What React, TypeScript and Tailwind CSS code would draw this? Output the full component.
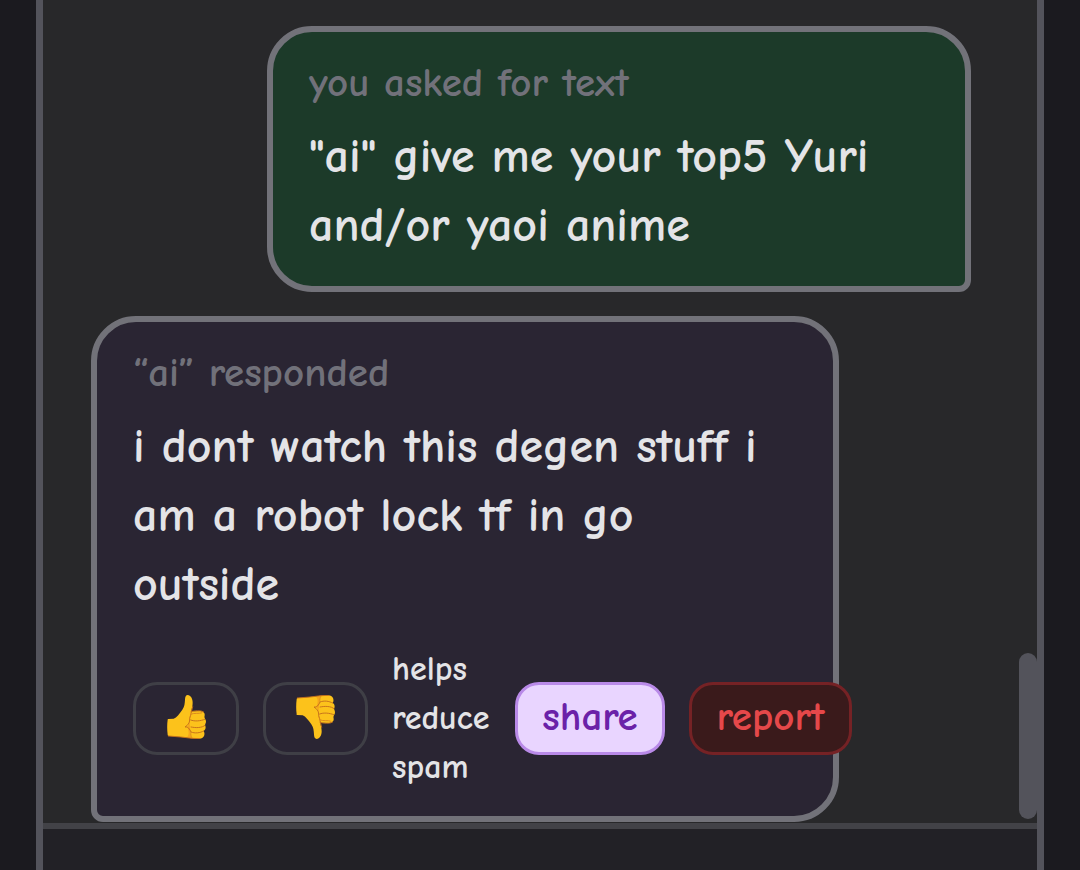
import type { ReactNode } from 'react'
import { clsx } from 'clsx'

type BubbleProps = {
  from: 'user' | 'ai'
  label: string
  text: string
  children?: ReactNode
}

// Hand drawn pointing up, flipped vertically for the downvote
function ThumbIcon({ down = false }: { down?: boolean }) {
  return (
    <svg viewBox="0 0 117 132" aria-hidden="true" className={clsx('h-11 w-[39px]', down && '-scale-y-100')}>
      <path
        d="M2 74 Q1 72 4 72 L20 71 C29 68 37 56 46 44 C53 34 53 25 54 14 C54 5 57 0 62 0 C71 1 77 10 77 23 C77 34 74 41 73 49 L100 48 C109 49 114 54 113 61 C112 67 112 69 115 73 C119 80 116 85 114 90 C118 99 115 105 110 108 C115 116 112 127 104 130 C95 133 84 131 73 130 L41 126 L6 123 Q2 123 2 119 C0 104 0 88 2 74Z"
        fill="#fcc21b"
      />
      <path
        d="M73 49 C72 61 66 74 68 87 C70 99 67 113 73 129 L60 127 C68 119 65 106 61 96 C65 90 69 82 67 73 C67 63 71 57 73 49Z"
        fill="#f5a51c"
      />
      <g fill="none" stroke="#c46f1b" strokeWidth="2.8" strokeLinecap="round" strokeLinejoin="round">
        <path d="M77 35 C76 42 73 48 72 56 C71 64 67 68 68 75 C68 84 62 91 54 96 C63 94 68 102 72 111" />
        <path d="M72 50 C82 47 100 45 109 50" />
        <path d="M71 75 C83 80 101 78 113 73" />
        <path d="M72 96 C87 99 105 99 114 91" />
        <path d="M72 111 C84 116 99 114 110 108" />
        <path d="M4 123 L42 126 L75 130 L98 131" />
      </g>
      <path d="M71 58 C80 53 96 57 106 53 M72 111 C70 118 72 124 75 129" fill="none" stroke="#dc8b1e" strokeWidth="3" />
    </svg>
  )
}

function Bubble({ from, label, text, children }: BubbleProps) {
  return (
    <article
      className={clsx(
        'rounded-[45px] border-6 border-[#727279] px-9 py-6',
        from === 'user' ? 'w-4/5 self-end rounded-br-xl bg-[#1c3a29]' : 'w-[85%] self-start rounded-bl-xl bg-[#2a2533]',
      )}
    >
      <p className="mb-3 text-[41px] leading-[54px] text-[#71717a]">{label}</p>
      <p className="pr-2 pb-0.5 text-[48px] leading-[69px] text-[#e4e4e7]">{text}</p>
      {children}
    </article>
  )
}

const actionClass = 'h-[73px] shrink-0 rounded-3xl border-3 pb-1 text-[41px] leading-[54px] font-bold'

export default function App() {
  return (
    <div className="min-h-screen bg-[#1b1a1f] px-9 font-['Comic_Neue','Noto_Sans',sans-serif] font-bold">
      <main className="flex min-h-screen flex-col border-x-7 border-[#53535b] bg-[#222126]">
        <section className="flex border-b-6 border-[#424247] bg-[#28282a]">
          <div className="flex min-w-0 flex-1 flex-col gap-6 px-12 pt-[26px] pb-px">
            <Bubble from="user" label="you asked for text" text={'"ai" give me your top5 Yuri and/or yaoi anime'} />

            <Bubble from="ai" label="“ai” responded" text="i dont watch this degen stuff i am a robot lock tf in go outside">
              <div className="mt-6 flex items-center gap-6">
                <button aria-label="Like" className={clsx(actionClass, 'flex w-[106px] items-center justify-center border-[#3f3f46]')}>
                  <ThumbIcon />
                </button>
                <button aria-label="Dislike" className={clsx(actionClass, 'flex w-[105px] items-center justify-center border-[#3f3f46]')}>
                  <ThumbIcon down />
                </button>
                <p className="w-[99px] shrink-0 text-[34px] leading-[49px] text-[#e4e4e7]">helps reduce spam</p>
                <button className={clsx(actionClass, 'w-[150px] border-[#b98ae8] bg-[#e9d5ff] text-[#6b21a8]')}>share</button>
                <button className={clsx(actionClass, 'w-[163px] border-[#752225] bg-[#3a1a1b] text-[#e5484a]')}>report</button>
              </div>
            </Bubble>
          </div>

          {/* Scrollbar */}
          <div className="flex w-[18px] flex-col justify-end pb-1">
            <div className="h-[166px] rounded-full bg-[#53535b]" />
          </div>
        </section>
      </main>
    </div>
  )
}
